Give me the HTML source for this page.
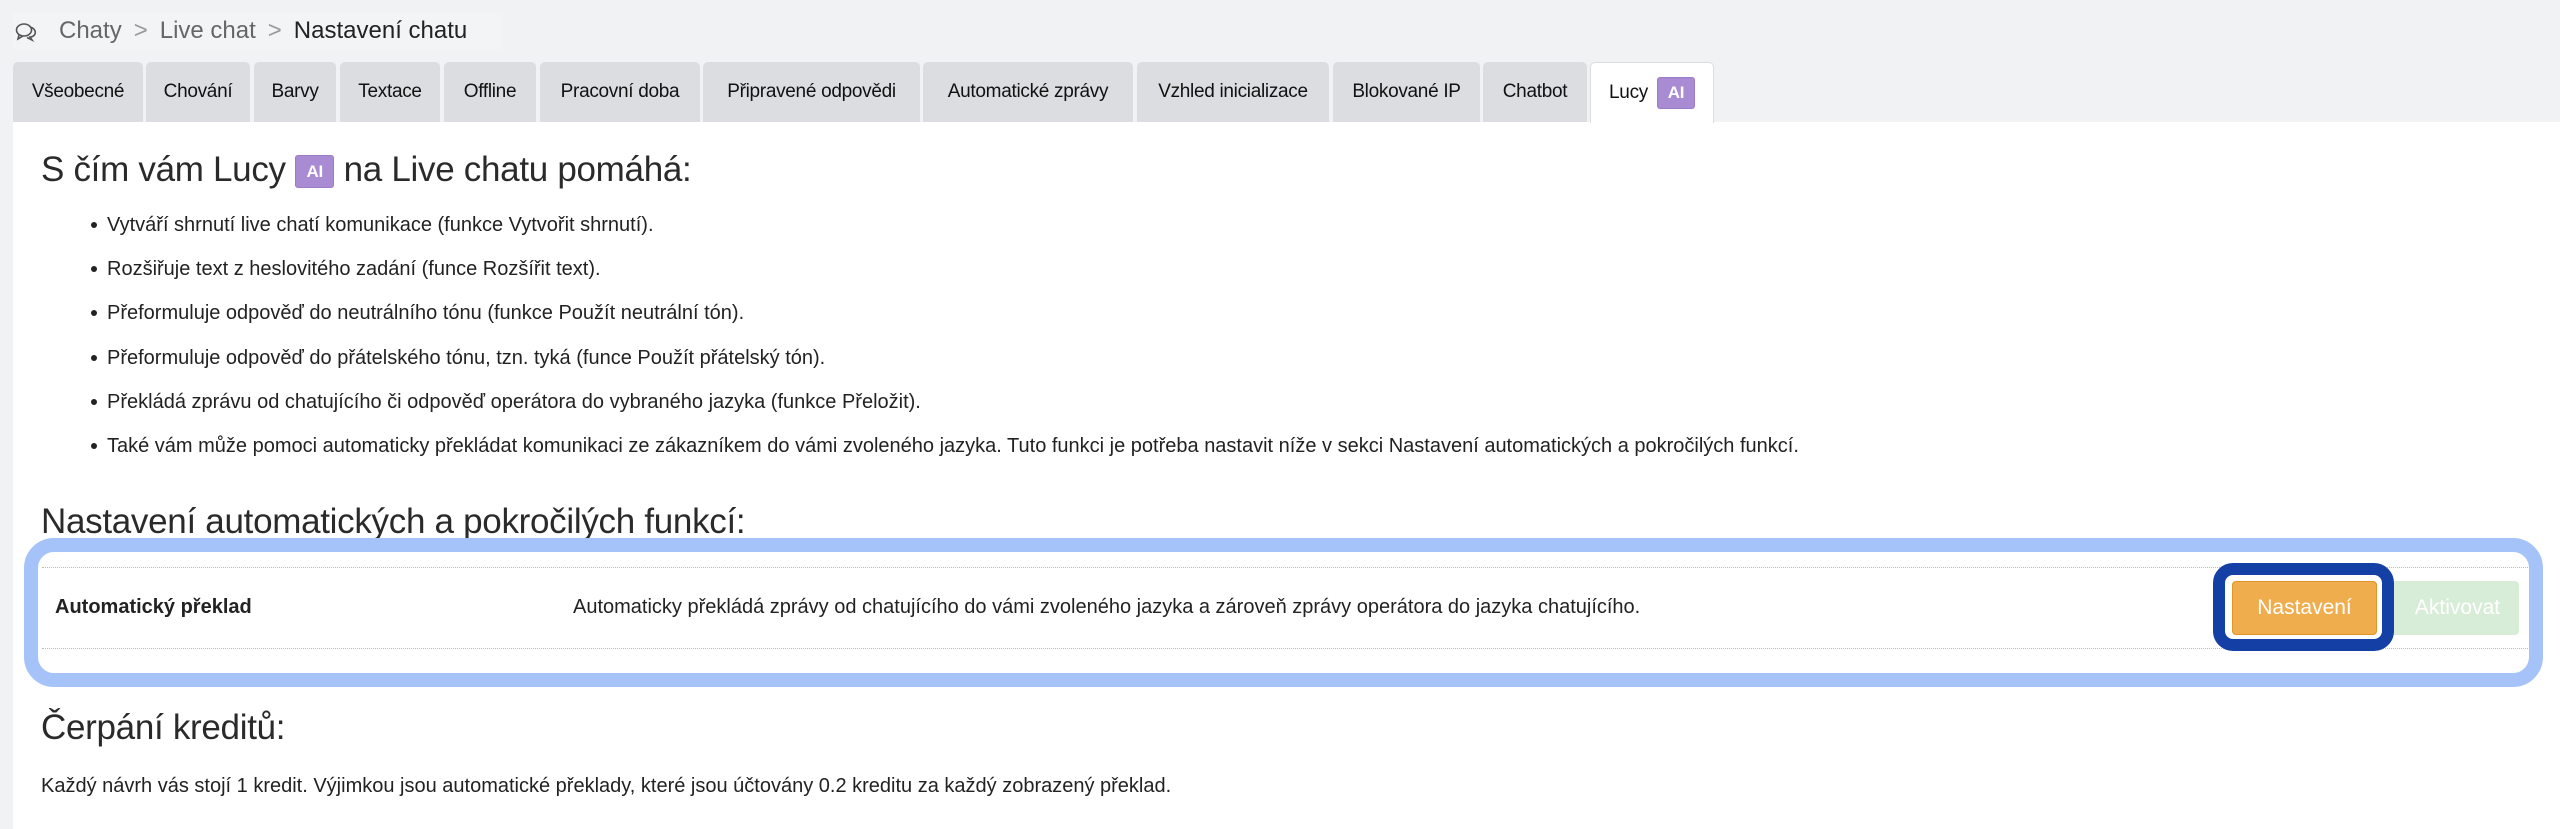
<!DOCTYPE html>
<html><head><meta charset="utf-8"><style>
*{box-sizing:border-box;margin:0;padding:0}
body{width:2560px;height:829px;background:#f1f2f4;font-family:"Liberation Sans",sans-serif;color:#222;position:relative;overflow:hidden}
.abs{position:absolute}
.bc{left:13px;top:13px;width:490px;height:36px;background:#f3f4f6;font-size:24px;color:#666;line-height:36px;padding-left:46px;white-space:nowrap}
.bc .sep{color:#999;margin:0 12px}
.bc b{font-weight:normal;color:#222}
.tab{position:absolute;top:62px;height:60px;background:#dcdde1;border-radius:5px 5px 0 0;font-size:19px;line-height:60px;text-align:center;color:#111;white-space:nowrap;letter-spacing:-0.3px}
.tab.act{background:#fff;border:1px solid #ddd;border-bottom:none;height:61px}
.ai{display:inline-block;background:#a88bd2;color:#fff;font-weight:bold;border-radius:3px;text-align:center;border:1px solid #9a7cc8}
.panel{left:13px;top:122px;width:2547px;height:707px;background:#fff}
h1{position:absolute;font-weight:normal;font-size:35px;color:#2a2a2a;white-space:nowrap;letter-spacing:-0.3px}
ul{position:absolute;left:86px;top:212px;font-size:20px;list-style:none}
li{height:44.2px;line-height:26px;white-space:nowrap;position:relative;padding-left:21px}
li:before{content:"";position:absolute;left:5px;top:10px;width:6px;height:6px;border-radius:50%;background:#222}
.blue{left:24px;top:538px;width:2519px;height:149px;border:14px solid #a6c3f9;border-radius:30px;background:#fff}
.dot{position:absolute;left:42px;width:2488px;border-top:1px dotted #bbb}
</style></head><body>
<div class="abs bc"><svg class="abs" style="left:2px;top:9px" width="22" height="20" viewBox="0 0 22 20" fill="none" stroke="#555" stroke-width="1.6"><ellipse cx="9" cy="8" rx="7.5" ry="6"/><path d="M4 13 L3 17 L8 14"/><path d="M15 5 C19 6 21 9 20 12 C19 14 17 15 15 15 L17 18 L12 15.5"/></svg>Chaty<span class="sep">&gt;</span>Live chat<span class="sep">&gt;</span><b>Nastavení chatu</b></div>

<div class="tab" style="left:13px;width:130px">Všeobecné</div>
<div class="tab" style="left:146px;width:104px">Chování</div>
<div class="tab" style="left:254px;width:82px">Barvy</div>
<div class="tab" style="left:340px;width:100px">Textace</div>
<div class="tab" style="left:444px;width:92px">Offline</div>
<div class="tab" style="left:540px;width:160px">Pracovní doba</div>
<div class="tab" style="left:703px;width:217px">Připravené odpovědi</div>
<div class="tab" style="left:923px;width:210px">Automatické zprávy</div>
<div class="tab" style="left:1137px;width:192px">Vzhled inicializace</div>
<div class="tab" style="left:1333px;width:147px">Blokované IP</div>
<div class="tab" style="left:1483px;width:104px">Chatbot</div>

<div class="abs panel"></div>
<div class="tab act" style="left:1590px;width:124px">Lucy <span class="ai" style="width:38px;height:32px;line-height:30px;font-size:17px;vertical-align:middle;margin-left:4px">AI</span></div>

<h1 style="left:41px;top:150px">S čím vám Lucy <span class="ai" style="width:39px;height:33px;line-height:31px;font-size:17px;vertical-align:4px">AI</span> na Live chatu pomáhá:</h1>
<ul>
<li>Vytváří shrnutí live chatí komunikace (funkce Vytvořit shrnutí).</li>
<li>Rozšiřuje text z heslovitého zadání (funce Rozšířit text).</li>
<li>Přeformuluje odpověď do neutrálního tónu (funkce Použít neutrální tón).</li>
<li>Přeformuluje odpověď do přátelského tónu, tzn. tyká (funce Použít přátelský tón).</li>
<li>Překládá zprávu od chatujícího či odpověď operátora do vybraného jazyka (funkce Přeložit).</li>
<li>Také vám může pomoci automaticky překládat komunikaci ze zákazníkem do vámi zvoleného jazyka. Tuto funkci je potřeba nastavit níže v sekci Nastavení automatických a pokročilých funkcí.</li>
</ul>
<h1 style="left:41px;top:502px">Nastavení automatických a pokročilých funkcí:</h1>
<div class="abs blue"></div>
<div class="dot" style="top:567px"></div>
<div class="dot" style="top:648px"></div>
<div class="abs" style="left:55px;top:596px;font-size:20px;font-weight:bold">Automatický překlad</div>
<div class="abs" style="left:573px;top:596px;font-size:20px;white-space:nowrap">Automaticky překládá zprávy od chatujícího do vámi zvoleného jazyka a zároveň zprávy operátora do jazyka chatujícího.</div>
<div class="abs" style="left:2390px;top:581px;width:129px;height:54px;background:#d8edd8;border-radius:4px;color:#fff;font-size:21px;line-height:54px;text-align:center;padding-left:6px">Aktivovat</div>
<div class="abs" style="left:2213px;top:563px;width:181px;height:88px;border:12px solid #1440a6;border-radius:20px;background:#fff"></div>
<div class="abs" style="left:2232px;top:581px;width:145px;height:54px;background:#f0ad4e;border:1px solid #e29422;border-radius:4px;color:#fff;font-size:21px;line-height:52px;text-align:center">Nastavení</div>
<h1 style="left:41px;top:708px">Čerpání kreditů:</h1>
<div class="abs" style="left:41px;top:775px;font-size:20px;white-space:nowrap">Každý návrh vás stojí 1 kredit. Výjimkou jsou automatické překlady, které jsou účtovány 0.2 kreditu za každý zobrazený překlad.</div>
</body></html>
